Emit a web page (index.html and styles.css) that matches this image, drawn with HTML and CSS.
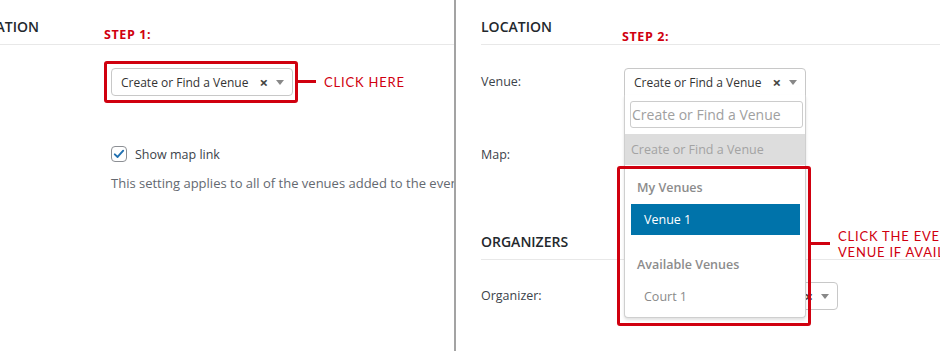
FILE: index.html
```html
<!DOCTYPE html>
<html lang="en">
<head>
    <meta charset="UTF-8">
    <meta name="viewport" content="width=device-width, initial-scale=1.0">
    <title>Event venue setup</title>
    <link rel="stylesheet" href="styles.css">
</head>
<body>
    <div class="screen">
        <!-- step 1 -->
        <section class="panel panel-left">
            <div class="panel-body">
                <h2 class="section-title">LOCATION</h2>
                <div class="field-row field-venue">
                    <label class="field-label">Venue:</label>
                    <div class="select">
                        <span class="select-value">Create or Find a Venue</span>
                        <span class="select-clear">&times;</span>
                        <span class="select-arrow"></span>
                    </div>
                </div>
                <div class="field-row field-map">
                    <label class="field-label"></label>
                    <div class="map-setting">
                        <label class="check">
                            <span class="check-box">
                                <svg viewBox="0 0 16 16" width="14" height="14"><path d="M3.2 8.4 L6.4 11.4 L12.8 4.2" fill="none" stroke="#2271b1" stroke-width="2.2" stroke-linecap="round" stroke-linejoin="round"/></svg>
                            </span>
                            Show map link
                        </label>
                        <p class="help">This setting applies to all of the venues added to the event.</p>
                    </div>
                </div>
            </div>

            <span class="step step-1">STEP 1:</span>
            <span class="mark mark-1"></span>
            <span class="leader leader-1"></span>
            <span class="callout callout-1">CLICK HERE</span>
        </section>

        <div class="divider"></div>

        <!-- step 2 -->
        <section class="panel panel-right">
            <div class="panel-body">
                <h2 class="section-title">LOCATION</h2>
                <div class="field-row field-venue">
                    <label class="field-label">Venue:</label>
                    <div class="select select-open">
                        <span class="select-value">Create or Find a Venue</span>
                        <span class="select-clear">&times;</span>
                        <span class="select-arrow"></span>
                        <div class="dropdown">
                            <div class="dropdown-search">
                                <input type="text" placeholder="Create or Find a Venue">
                            </div>
                            <ul class="options">
                                <li class="option option-disabled">Create or Find a Venue</li>
                                <li class="group">
                                    <strong class="group-label">My Venues</strong>
                                    <ul>
                                        <li class="option option-active">Venue 1</li>
                                    </ul>
                                </li>
                                <li class="group">
                                    <strong class="group-label">Available Venues</strong>
                                    <ul>
                                        <li class="option">Court 1</li>
                                    </ul>
                                </li>
                            </ul>
                        </div>
                    </div>
                </div>
                <div class="field-row field-map">
                    <label class="field-label">Map:</label>
                </div>

                <h2 class="section-title section-next">ORGANIZERS</h2>
                <div class="field-row field-organizer">
                    <label class="field-label">Organizer:</label>
                    <div class="select select-wide">
                        <span class="select-value"></span>
                        <span class="select-clear">&times;</span>
                        <span class="select-arrow"></span>
                    </div>
                </div>
            </div>

            <span class="step step-2">STEP 2:</span>
            <span class="mark mark-2"></span>
            <span class="leader leader-2"></span>
            <span class="callout callout-2">CLICK THE EVENT'S<br>VENUE IF AVAILABLE</span>
        </section>
    </div>
</body>
</html>
```

FILE: styles.css
```css
* {
    margin: 0;
    padding: 0;
    box-sizing: border-box;
}
ul, ol {
    list-style: none;
}
body {
    background: #fff;
    font-family: "Open Sans", Lato, sans-serif;
    font-size: 12.5px;
    color: #3c434a;
}
.screen {
    display: flex;
    width: 940px;
    height: 351px;
    overflow: hidden;
}
.panel {
    position: relative;
    height: 100%;
    overflow: hidden;
}
.panel-left {
    width: 454px;
}
.panel-left .panel-body {
    margin-left: -32px;
}
.panel-right {
    flex: 1;
    padding-left: 25px;
}
.divider {
    width: 2px;
    background-color: #a3a3a3;
}

.section-title {
    font-size: 14px;
    line-height: 20px;
    font-weight: 600;
    color: #23282d;
    padding: 17px 0 7px;
    border-bottom: 1px solid #e8e8e8;
}
.section-next {
    margin-top: 50px;
}

.field-row {
    display: flex;
    align-items: center;
}
.field-label {
    width: 143px;
    flex-shrink: 0;
    line-height: 20px;
}
.panel-left .field-label {
    color: #2a5fa8;
    text-indent: -9px;
}
.field-venue {
    margin-top: 23px;
}
.field-map {
    margin-top: 49px;
    align-items: flex-start;
}
.field-organizer {
    margin-top: 22px;
}

.select {
    position: relative;
    display: flex;
    align-items: center;
    width: 182px;
    height: 28px;
    padding: 0 8px 0 9px;
    border: 1px solid #c8c8c8;
    border-radius: 4px;
    background: #fff;
}
.select-wide {
    width: 214px;
}
.select-open {
    border-radius: 4px 4px 0 0;
    z-index: 2;
}
.select-value {
    flex: 1;
    white-space: nowrap;
    font-size: 12px;
    color: #333;
}
.select-clear {
    font-size: 15px;
    font-weight: 700;
    color: #444;
    margin-right: 8px;
    line-height: 1;
}
.select-arrow {
    width: 0;
    height: 0;
    border-left: 4px solid transparent;
    border-right: 4px solid transparent;
    border-top: 5px solid #888;
}

.dropdown {
    position: absolute;
    top: 100%;
    left: -1px;
    width: 182px;
    background: #fff;
    border: 1px solid #cfcfcf;
    border-top: none;
    border-radius: 0 0 4px 4px;
    box-shadow: 0 2px 3px rgba(0, 0, 0, 0.12);
}
.dropdown-search {
    padding: 6px 2px 6px 5px;
}
.dropdown-search input {
    width: 100%;
    height: 27px;
    padding: 0 1px;
    border: 1px solid #ccc;
    border-radius: 3px;
    font-family: inherit;
    font-size: 14px;
    color: #333;
    outline: none;
}
.dropdown-search input::placeholder {
    color: #a0a0a0;
}
.option {
    height: 31px;
    line-height: 31px;
    white-space: nowrap;
    color: #8a8a8a;
}
.option-disabled {
    background: #dddddd;
    color: #a3a3a3;
    padding-left: 6px;
}
.group {
    padding: 0 5px 0 6px;
}
.group + .group {
    margin-top: 7px;
}
.group-label {
    display: block;
    padding: 13px 0 6px 6px;
    line-height: 20px;
    font-weight: 600;
    color: #8c8c8c;
}
.group .option {
    padding-left: 13px;
}
.option-active {
    background: #0073aa;
    color: #fff;
}
.group:last-child {
    padding-bottom: 5px;
}

.check {
    display: flex;
    align-items: center;
    gap: 8px;
    line-height: 20px;
    color: #3c434a;
}
.check-box {
    display: flex;
    align-items: center;
    justify-content: center;
    width: 16px;
    height: 16px;
    border: 1px solid #8c8f94;
    border-radius: 4px;
    margin-top: -2px;
}
.help {
    margin-top: 8px;
    line-height: 20px;
    white-space: nowrap;
    font-size: 13px;
    color: #646970;
}

/* annotations */
.step,
.callout {
    position: absolute;
    color: #d0000f;
    white-space: nowrap;
}
.step {
    font-weight: 700;
    font-size: 12.5px;
    line-height: 16px;
    letter-spacing: 0.6px;
}
.step-1 {
    left: 104px;
    top: 27px;
}
.step-2 {
    left: 166px;
    top: 29px;
}
.mark {
    position: absolute;
    border: 3px solid #d0000f;
    border-radius: 3px;
    z-index: 3;
}
.mark-1 {
    left: 104px;
    top: 61px;
    width: 194px;
    height: 42px;
}
.mark-2 {
    left: 161px;
    top: 166px;
    width: 194px;
    height: 160px;
}
.leader {
    position: absolute;
    height: 3px;
    background: #d0000f;
}
.leader-1 {
    left: 298px;
    top: 80px;
    width: 18px;
}
.leader-2 {
    left: 355px;
    top: 242px;
    width: 19px;
}
.callout {
    font-family: Lato, "Open Sans", sans-serif;
    font-size: 13px;
    line-height: 16px;
    letter-spacing: 0.8px;
}
.callout-1 {
    left: 324px;
    top: 74px;
}
.callout-2 {
    left: 382px;
    top: 228px;
}
```
